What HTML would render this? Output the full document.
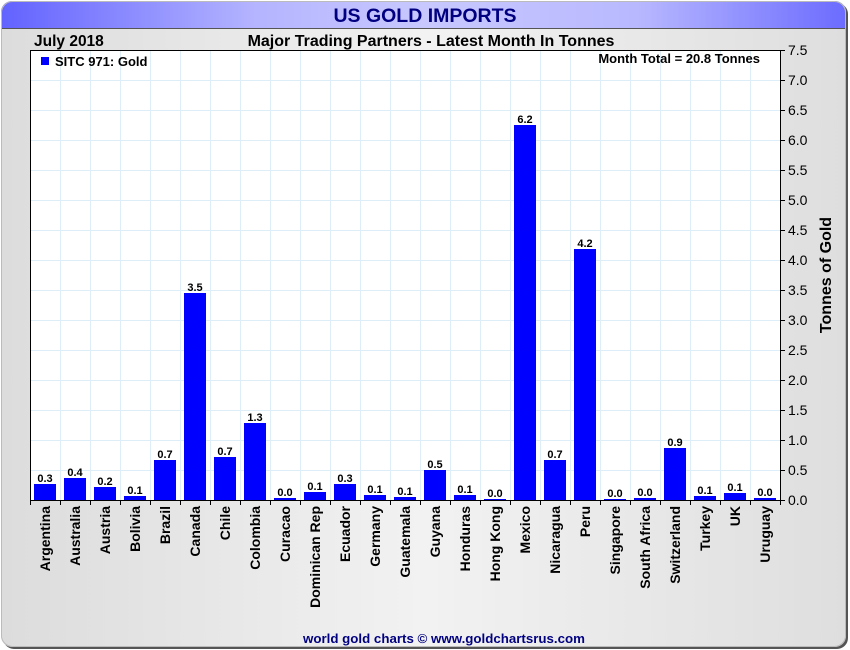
<!DOCTYPE html>
<html><head><meta charset="utf-8"><style>
html,body{margin:0;padding:0;width:850px;height:650px;overflow:hidden;background:#fff}
svg{display:block}
text{font-family:"Liberation Sans",Arial,sans-serif}
</style></head><body>
<svg width="850" height="650" viewBox="0 0 850 650" xmlns="http://www.w3.org/2000/svg">
<defs>
<linearGradient id="tb" x1="0" x2="1" y1="0" y2="0">
<stop offset="0" stop-color="#6262ff"/><stop offset="0.3" stop-color="#b4b4ff"/><stop offset="0.5" stop-color="#c8c8ff"/><stop offset="0.75" stop-color="#b8b8ff"/><stop offset="1" stop-color="#6a6aff"/></linearGradient>
<linearGradient id="bg" x1="0" x2="1" y1="0" y2="0">
<stop offset="0" stop-color="#dcdcdc"/><stop offset="0.5" stop-color="#f2f2f2"/><stop offset="1" stop-color="#dedede"/></linearGradient>
<clipPath id="fr"><rect x="1" y="1" width="845" height="646" rx="11"/></clipPath>
</defs>
<rect x="3" y="3" width="845" height="646" rx="11" fill="#555"/>
<g clip-path="url(#fr)">
<rect x="0" y="0" width="850" height="650" fill="url(#bg)"/>
<rect x="0" y="0" width="850" height="28" fill="url(#tb)"/>
<line x1="0" y1="28.5" x2="850" y2="28.5" stroke="#555" stroke-width="1"/>
</g>
<rect x="1.5" y="1.5" width="844" height="645" rx="11" fill="none" stroke="#bbb" stroke-width="1"/>
<text x="425" y="22" text-anchor="middle" font-size="19.5" font-weight="bold" fill="#000080">US GOLD IMPORTS</text>
<text x="34" y="46" font-size="15.5" font-weight="bold" fill="#000">July 2018</text>
<text x="431" y="46" text-anchor="middle" font-size="16" font-weight="bold" fill="#000">Major Trading Partners - Latest Month In Tonnes</text>
<rect x="30" y="50" width="750" height="450" fill="#fff"/>
<g stroke="#ddeef8" stroke-width="1">
<path d="M60.5 50V500M90.5 50V500M120.5 50V500M150.5 50V500M180.5 50V500M210.5 50V500M240.5 50V500M270.5 50V500M300.5 50V500M330.5 50V500M360.5 50V500M390.5 50V500M420.5 50V500M450.5 50V500M480.5 50V500M510.5 50V500M540.5 50V500M570.5 50V500M600.5 50V500M630.5 50V500M660.5 50V500M690.5 50V500M720.5 50V500M750.5 50V500"/>
<path d="M30 80.5H780M30 110.5H780M30 140.5H780M30 170.5H780M30 200.5H780M30 230.5H780M30 260.5H780M30 290.5H780M30 320.5H780M30 350.5H780M30 380.5H780M30 410.5H780M30 440.5H780M30 470.5H780"/>
</g>
<g fill="#0000ff">
<rect x="34" y="484" width="22" height="16"/>
<rect x="64" y="478" width="22" height="22"/>
<rect x="94" y="487" width="22" height="13"/>
<rect x="124" y="496" width="22" height="4"/>
<rect x="154" y="460" width="22" height="40"/>
<rect x="184" y="293" width="22" height="207"/>
<rect x="214" y="457" width="22" height="43"/>
<rect x="244" y="423" width="22" height="77"/>
<rect x="274" y="498" width="22" height="2"/>
<rect x="304" y="492" width="22" height="8"/>
<rect x="334" y="484" width="22" height="16"/>
<rect x="364" y="495" width="22" height="5"/>
<rect x="394" y="497" width="22" height="3"/>
<rect x="424" y="470" width="22" height="30"/>
<rect x="454" y="495" width="22" height="5"/>
<rect x="484" y="499" width="22" height="1"/>
<rect x="514" y="125" width="22" height="375"/>
<rect x="544" y="460" width="22" height="40"/>
<rect x="574" y="249" width="22" height="251"/>
<rect x="604" y="499" width="22" height="1"/>
<rect x="634" y="498" width="22" height="2"/>
<rect x="664" y="448" width="22" height="52"/>
<rect x="694" y="496" width="22" height="4"/>
<rect x="724" y="493" width="22" height="7"/>
<rect x="754" y="498" width="22" height="2"/>
</g>
<g font-size="11" font-weight="bold" text-anchor="middle" fill="#000">
<text x="45" y="482">0.3</text><text x="75" y="476">0.4</text><text x="105" y="485">0.2</text><text x="135" y="494">0.1</text>
<text x="165" y="458">0.7</text><text x="195" y="291">3.5</text><text x="225" y="455">0.7</text><text x="255" y="421">1.3</text>
<text x="285" y="496">0.0</text><text x="315" y="490">0.1</text><text x="345" y="482">0.3</text><text x="375" y="493">0.1</text>
<text x="405" y="495">0.1</text><text x="435" y="468">0.5</text><text x="465" y="493">0.1</text><text x="495" y="497">0.0</text>
<text x="525" y="123">6.2</text><text x="555" y="458">0.7</text><text x="585" y="247">4.2</text><text x="615" y="497">0.0</text>
<text x="645" y="496">0.0</text><text x="675" y="446">0.9</text><text x="705" y="494">0.1</text><text x="735" y="491">0.1</text>
<text x="765" y="496">0.0</text>
</g>
<rect x="30.5" y="50.5" width="750" height="450" fill="none" stroke="#000" stroke-width="1"/>
<g stroke="#000" stroke-width="1">
<path d="M30.5 500V505M60.5 500V505M90.5 500V505M120.5 500V505M150.5 500V505M180.5 500V505M210.5 500V505M240.5 500V505M270.5 500V505M300.5 500V505M330.5 500V505M360.5 500V505M390.5 500V505M420.5 500V505M450.5 500V505M480.5 500V505M510.5 500V505M540.5 500V505M570.5 500V505M600.5 500V505M630.5 500V505M660.5 500V505M690.5 500V505M720.5 500V505M750.5 500V505M780.5 500V505"/>
<path d="M780 50.5H785M780 80.5H785M780 110.5H785M780 140.5H785M780 170.5H785M780 200.5H785M780 230.5H785M780 260.5H785M780 290.5H785M780 320.5H785M780 350.5H785M780 380.5H785M780 410.5H785M780 440.5H785M780 470.5H785M780 500.5H785"/>
</g>
<g font-size="14" fill="#000">
<text x="788" y="55">7.5</text><text x="788" y="85">7.0</text><text x="788" y="115">6.5</text><text x="788" y="145">6.0</text>
<text x="788" y="175">5.5</text><text x="788" y="205">5.0</text><text x="788" y="235">4.5</text><text x="788" y="265">4.0</text>
<text x="788" y="295">3.5</text><text x="788" y="325">3.0</text><text x="788" y="355">2.5</text><text x="788" y="385">2.0</text>
<text x="788" y="415">1.5</text><text x="788" y="445">1.0</text><text x="788" y="475">0.5</text><text x="788" y="505">0.0</text>
</g>
<text transform="translate(831,275) rotate(-90)" text-anchor="middle" font-size="16" font-weight="bold" fill="#000">Tonnes of Gold</text>
<rect x="41" y="57" width="8" height="8" fill="#0000ff"/>
<text x="55" y="66" font-size="13" font-weight="bold" fill="#000">SITC 971: Gold</text>
<text x="760" y="63" text-anchor="end" font-size="13" font-weight="bold" fill="#000">Month Total = 20.8 Tonnes</text>
<g font-size="14" font-weight="bold" fill="#000" text-anchor="end">
<text transform="translate(50,506) rotate(-90)">Argentina</text>
<text transform="translate(80,506) rotate(-90)">Australia</text>
<text transform="translate(110,506) rotate(-90)">Austria</text>
<text transform="translate(140,506) rotate(-90)">Bolivia</text>
<text transform="translate(170,506) rotate(-90)">Brazil</text>
<text transform="translate(200,506) rotate(-90)">Canada</text>
<text transform="translate(230,506) rotate(-90)">Chile</text>
<text transform="translate(260,506) rotate(-90)">Colombia</text>
<text transform="translate(290,506) rotate(-90)">Curacao</text>
<text transform="translate(320,506) rotate(-90)">Dominican Rep</text>
<text transform="translate(350,506) rotate(-90)">Ecuador</text>
<text transform="translate(380,506) rotate(-90)">Germany</text>
<text transform="translate(410,506) rotate(-90)">Guatemala</text>
<text transform="translate(440,506) rotate(-90)">Guyana</text>
<text transform="translate(470,506) rotate(-90)">Honduras</text>
<text transform="translate(500,506) rotate(-90)">Hong Kong</text>
<text transform="translate(530,506) rotate(-90)">Mexico</text>
<text transform="translate(560,506) rotate(-90)">Nicaragua</text>
<text transform="translate(590,506) rotate(-90)">Peru</text>
<text transform="translate(620,506) rotate(-90)">Singapore</text>
<text transform="translate(650,506) rotate(-90)">South Africa</text>
<text transform="translate(680,506) rotate(-90)">Switzerland</text>
<text transform="translate(710,506) rotate(-90)">Turkey</text>
<text transform="translate(740,506) rotate(-90)">UK</text>
<text transform="translate(770,506) rotate(-90)">Uruguay</text>
</g>
<text x="444" y="643" text-anchor="middle" font-size="13.3" font-weight="bold" fill="#000080">world gold charts © www.goldchartsrus.com</text>
</svg>
</body></html>
